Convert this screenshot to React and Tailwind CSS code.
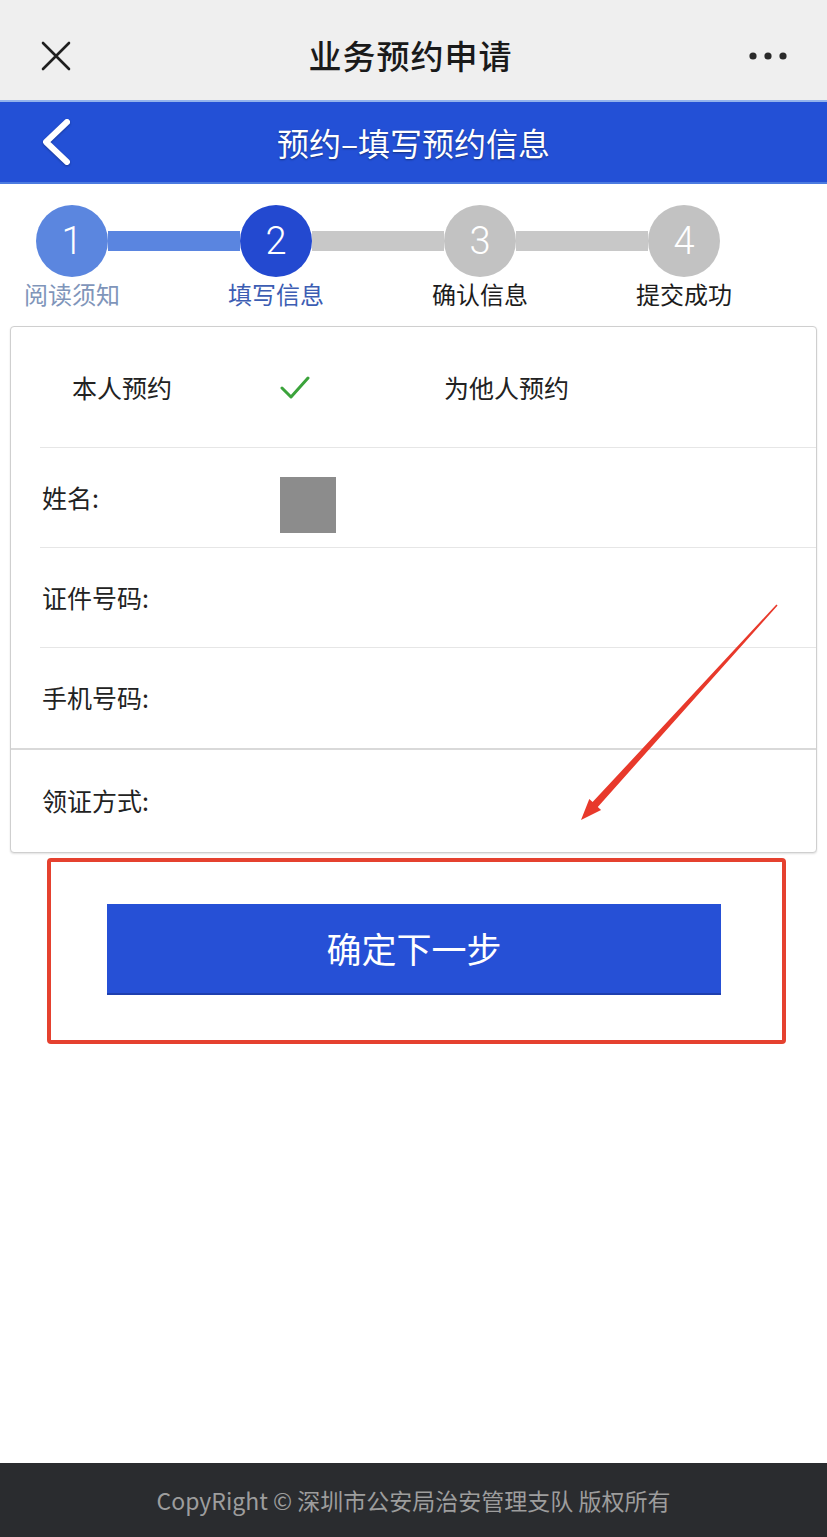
import React from "react";

const steps = [
  { n: 1, label: "阅读须知", circle: "bg-[#5b86df]", text: "text-[#7f95ba]" },
  { n: 2, label: "填写信息", circle: "bg-[#2349d0]", text: "text-[#3c5db3]" },
  { n: 3, label: "确认信息", circle: "bg-[#c2c2c2]", text: "text-[#1c1c1c]" },
  { n: 4, label: "提交成功", circle: "bg-[#c2c2c2]", text: "text-[#1c1c1c]" },
];

const bars = ["bg-[#5a85e0]", "bg-[#c8c8c8]", "bg-[#c8c8c8]"];

function Stepper() {
  return (
    <div className="pt-[21px]">
      <div className="flex items-center pl-[36px]">
        {steps.map((s, i) => (
          <React.Fragment key={s.n}>
            <div
              className={`w-[72px] h-[72px] rounded-full ${s.circle} flex items-center justify-center text-white text-[38px] font-light leading-none font-['Roboto',sans-serif]`}
            >
              {s.n}
            </div>
            {i < 3 && <div className={`w-[132px] h-[20px] ${bars[i]}`} />}
          </React.Fragment>
        ))}
      </div>
      <div className="flex pl-[36px]">
        {steps.map((s, i) => (
          <React.Fragment key={s.n}>
            <div className={`w-[72px] flex justify-center whitespace-nowrap text-[24px] leading-[34px] ${s.text}`}>
              {s.label}
            </div>
            {i < 3 && <div className="w-[132px]" />}
          </React.Fragment>
        ))}
      </div>
    </div>
  );
}

function Row({ label, children, last }) {
  return (
    <div className="relative h-[100px] flex items-center pl-[31px] text-[25px] text-[#222]">
      <span className="w-[238px]">{label}</span>
      {children}
      {!last && <div className="absolute left-[29px] right-0 bottom-0 h-px bg-[#e6e6e6]" />}
    </div>
  );
}

export default function App() {
  return (
    <div className="relative h-screen flex flex-col bg-white font-['Noto_Sans_CJK_SC','Noto_Sans',sans-serif] overflow-hidden">
      {/* wechat top bar */}
      <div className="h-[100px] bg-[#efefef] flex items-center justify-between px-[40px] pt-[12px]">
        <svg width="32" height="32" viewBox="0 0 32 32" className="text-[#1f1f1f]">
          <path d="M3 3 L29 29 M29 3 L3 29" stroke="currentColor" strokeWidth="2.6" strokeLinecap="round" />
        </svg>
        <div className="text-[33px] font-medium text-[#1a1a1a] tracking-[1px]">业务预约申请</div>
        <svg width="38" height="10" viewBox="0 0 38 10" className="text-[#2a2a2a]">
          <circle cx="4" cy="5" r="3.6" fill="currentColor" />
          <circle cx="19" cy="5" r="3.6" fill="currentColor" />
          <circle cx="34" cy="5" r="3.6" fill="currentColor" />
        </svg>
      </div>

      {/* blue header */}
      <div className="h-[84px] bg-[#2350d6] border-t-2 border-t-[#93b3ec] border-b-2 border-b-[#4c7be0] flex items-center relative">
        <svg width="40" height="48" viewBox="0 0 40 48" className="absolute left-[36px] top-[16px] drop-shadow-[0_1px_1px_rgba(0,0,0,0.3)]">
          <path d="M31 4 L10 24 L31 44" stroke="#fff" strokeWidth="6" fill="none" strokeLinecap="round" strokeLinejoin="round" />
        </svg>
        <div className="flex-1 text-center text-white text-[32px] [text-shadow:0_1px_2px_rgba(0,0,0,0.4)]">
          预约–填写预约信息
        </div>
      </div>

      <Stepper />

      {/* form card */}
      <div className="mt-[15px] mx-[10px] border border-[#cfcfcf] rounded-[4px] shadow-[0_1px_2px_rgba(0,0,0,0.12)] bg-white">
        <div className="relative h-[121px] flex items-center text-[25px] text-[#222]">
          <span className="ml-[61px] w-[208px] whitespace-nowrap">本人预约</span>
          <svg width="30" height="24" viewBox="0 0 30 24" className="mt-[1px]">
            <path d="M2 12 L11 21 L28 2" stroke="#3ba33b" strokeWidth="3" fill="none" strokeLinecap="round" strokeLinejoin="round" />
          </svg>
          <span className="ml-[134px]">为他人预约</span>
          <div className="absolute left-[29px] right-0 bottom-0 h-px bg-[#e6e6e6]" />
        </div>
        <Row label="姓名:">
          <div className="w-[56px] h-[56px] bg-[#8c8c8c] mt-[14px]" />
        </Row>
        <Row label="证件号码:" />
        <Row label="手机号码:" last />
        <div className="h-[2px] bg-[#d9d9d9]" />
        <div className="h-[102px] flex items-center pl-[31px] text-[25px] text-[#222]">领证方式:</div>
      </div>

      {/* highlighted button */}
      <div className="mt-[5px] ml-[47px] mr-[41px] border-4 border-[#e5412f] rounded-[4px] pt-[42px] pb-[45px] pl-[56px] pr-[61px]">
        <div className="h-[91px] bg-[#2650d6] border-b-2 border-b-[#1e3fae] flex items-center justify-center text-white text-[35px]">
          确定下一步
        </div>
      </div>

      {/* footer */}
      <div className="mt-auto h-[74px] bg-[#2a2c2f] flex items-center justify-center text-[#9d9d9d] text-[23px]">
        CopyRight © 深圳市公安局治安管理支队 版权所有
      </div>

      {/* annotation arrow */}
      <svg
        width="215"
        height="230"
        viewBox="0 0 215 230"
        className="absolute left-[570px] top-[600px] pointer-events-none"
      >
        <polygon
          points="207.6,5.5 27.8,206.9 31.1,209.9 11,220 19.3,199.1 22.6,202.1 206.4,4.5"
          fill="#e8392b"
        />
      </svg>
    </div>
  );
}
